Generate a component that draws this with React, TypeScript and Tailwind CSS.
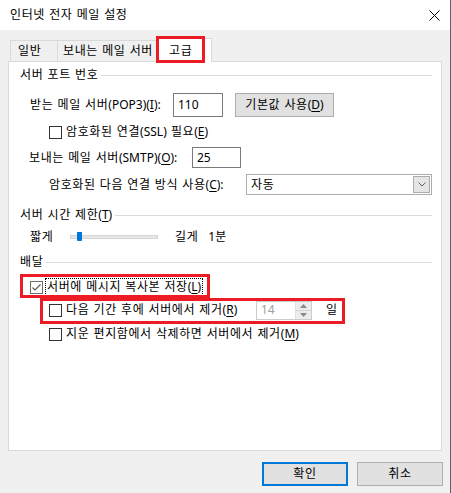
import React from 'react';

const font = { fontFamily: '"Noto Sans", "Noto Sans CJK KR", sans-serif' };

function GroupHeader({ children }: { children: React.ReactNode }) {
  return (
    <div className="flex items-center h-[20px]">
      <span className="whitespace-nowrap">{children}</span>
      <div className="flex-1 h-px bg-[#dcdcdc] ml-[3px]" />
    </div>
  );
}

function Checkbox({ checked = false, dim = false }: { checked?: boolean; dim?: boolean }) {
  return (
    <div
      className={`w-[13px] h-[13px] shrink-0 bg-white border flex items-center justify-center ${
        dim ? 'border-[#6d6d6d]' : 'border-[#333333]'
      }`}
    >
      {checked && (
        <svg width="11" height="11" viewBox="0 0 11 11">
          <path d="M1.5 5.5 L4 8 L9.5 2.5" fill="none" stroke="#5a5a5a" strokeWidth="1.2" />
        </svg>
      )}
    </div>
  );
}

// mnemonic letter
function U({ children }: { children: React.ReactNode }) {
  return <span className="underline underline-offset-2">{children}</span>;
}

// latin runs keep normal tracking (hangul is spaced out to match Malgun widths)
function L({ children }: { children: React.ReactNode }) {
  return <span className="tracking-normal">{children}</span>;
}

export default function App() {
  return (
    <div
      className="relative w-[451px] h-[493px] bg-[#f0f0f0] border-r border-[#5f5f5f] flex flex-col text-[12px] leading-[16px] tracking-[0.6px] [word-spacing:0.5px] text-black overflow-hidden"
      style={font}
    >
      {/* Title bar */}
      <div className="h-[30px] bg-white flex items-center justify-between pl-[10px] pr-[10px] shrink-0">
        <span>인터넷 전자 메일 설정</span>
        <svg width="11" height="11" viewBox="0 0 11 11">
          <path d="M0.5 0.5 L10.5 10.5 M10.5 0.5 L0.5 10.5" stroke="#000" strokeWidth="1" />
        </svg>
      </div>

      {/* Tabs */}
      <div className="h-[31px] flex items-end pl-[10px] shrink-0">
        <div className="w-[47px] h-[21px] border-t border-l border-[#d9d9d9] pl-[7px] flex items-center">일반</div>
        <div className="w-[100px] h-[21px] border-t border-l border-[#d9d9d9] pl-[5px] flex items-center whitespace-nowrap">
          보내는 메일 서버
        </div>
        <div className="relative z-10 w-[55px] h-[24px] -mb-px bg-white border-t border-l border-r border-[#d9d9d9] pl-[11px] flex items-center">
          고급
        </div>
      </div>

      {/* Panel */}
      <div className="ml-[8px] w-[434px] h-[390px] bg-white border border-[#d9d9d9] pl-[11px] pr-[9px] flex flex-col shrink-0">
        <div className="mt-[3px]">
          <GroupHeader>서버 포트 번호</GroupHeader>
        </div>

        {/* POP3 */}
        <div className="mt-[8px] h-[24px] flex items-center pl-[10px]">
          <span className="w-[143px] whitespace-nowrap">
            받는 메일 서버<L>(POP3)(<U>I</U>):</L>
          </span>
          <div className="w-[50px] h-[24px] border border-[#7a7a7a] pl-[4px] flex items-center tracking-normal">110</div>
          <div className="ml-[12px] w-[99px] h-[24px] bg-[#e1e1e1] border border-[#adadad] flex items-center justify-center whitespace-nowrap">
            기본값 사용<L>(<U>D</U>)</L>
          </div>
        </div>

        {/* SSL */}
        <div className="mt-[5px] h-[20px] flex items-center pl-[29px] gap-[4px]">
          <Checkbox />
          <span className="whitespace-nowrap">
            암호화된 연결<L>(SSL)</L> 필요<L>(<U>E</U>)</L>
          </span>
        </div>

        {/* SMTP */}
        <div className="mt-[5px] h-[21px] flex items-center pl-[9px]">
          <span className="w-[163px] whitespace-nowrap">
            보내는 메일 서버<L>(SMTP)(<U>O</U>):</L>
          </span>
          <div className="w-[49px] h-[21px] border border-[#7a7a7a] pl-[4px] flex items-center tracking-normal">25</div>
        </div>

        {/* Encryption */}
        <div className="mt-[6px] h-[21px] flex items-center pl-[29px]">
          <span className="w-[197px] whitespace-nowrap">
            암호화된 다음 연결 방식 사용<L>(<U>C</U>):</L>
          </span>
          <div className="w-[186px] h-[21px] border border-[#adadad] pl-[4px] pr-[1px] flex items-center justify-between">
            <span>자동</span>
            <div className="w-[17px] h-[17px] bg-[#e5e5e5] border border-[#acacac] flex items-center justify-center">
              <svg width="8" height="5" viewBox="0 0 8 5">
                <path d="M0.5 0.5 L4 4 L7.5 0.5" fill="none" stroke="#606060" strokeWidth="1" />
              </svg>
            </div>
          </div>
        </div>

        <div className="mt-[10px]">
          <GroupHeader>
            서버 시간 제한<L>(<U>T</U>)</L>
          </GroupHeader>
        </div>

        {/* Slider */}
        <div className="mt-[2px] h-[20px] flex items-center pl-[10px]">
          <span className="w-[40px]">짧게</span>
          <div className="relative w-[88px] h-[4px] bg-[#e7e7e7] border border-[#d6d6d6]">
            <div className="absolute left-[6px] top-[-4px] w-[5px] h-[9px] bg-[#0078d7] rounded-b-[1px]" />
          </div>
          <span className="ml-[17px]">길게</span>
          <span className="ml-[10px]">
            <L>1</L>분
          </span>
        </div>

        <div className="mt-[5px]">
          <GroupHeader>배달</GroupHeader>
        </div>

        {/* Leave copy on server */}
        <div className="mt-[5px] h-[20px] flex items-center pl-[10px]">
          <Checkbox checked dim />
          <span className="ml-[2px] px-[1px] h-[18px] flex items-center border border-dotted border-black whitespace-nowrap">
            서버에 메시지 복사본 저장<L>(<U>L</U>)</L>
          </span>
        </div>

        {/* Remove after */}
        <div className="mt-[3px] h-[20px] flex items-center pl-[29px]">
          <Checkbox />
          <span className="ml-[4px] w-[190px] whitespace-nowrap">
            다음 기간 후에 서버에서 제거<L>(<U>R</U>)</L>
          </span>
          <div className="w-[56px] h-[19px] border border-[#cccccc] flex items-center justify-between">
            <span className="pl-[4px] text-[#a0a0a0] tracking-normal">14</span>
            <div className="w-[16px] h-[17px] flex flex-col border-l border-[#e0e0e0]">
              <div className="flex-1 bg-[#ececec] border-b border-[#d4d4d4] flex items-center justify-center">
                <svg width="7" height="4" viewBox="0 0 7 4">
                  <path d="M0 4 L3.5 0 L7 4 Z" fill="#8a8a8a" />
                </svg>
              </div>
              <div className="flex-1 bg-[#ececec] flex items-center justify-center">
                <svg width="7" height="4" viewBox="0 0 7 4">
                  <path d="M0 0 L3.5 4 L7 0 Z" fill="#8a8a8a" />
                </svg>
              </div>
            </div>
          </div>
          <span className="ml-[14px]">일</span>
        </div>

        {/* Remove when deleted */}
        <div className="mt-[4px] h-[20px] flex items-center pl-[29px] gap-[4px]">
          <Checkbox />
          <span className="whitespace-nowrap">
            지운 편지함에서 삭제하면 서버에서 제거<L>(<U>M</U>)</L>
          </span>
        </div>
      </div>

      {/* Buttons */}
      <div className="mt-[11px] flex justify-end gap-[9px] pr-[7px]">
        <div className="w-[86px] h-[24px] bg-[#e1e1e1] border-2 border-[#0078d7] flex items-center justify-center">확인</div>
        <div className="w-[86px] h-[24px] bg-[#e1e1e1] border border-[#adadad] flex items-center justify-center">취소</div>
      </div>

      {/* Red annotation boxes */}
      <div className="absolute left-[156px] top-[36px] w-[49px] h-[27px] border-[3px] border-[#ed1c24] z-20 pointer-events-none" />
      <div className="absolute left-[20px] top-[274px] w-[190px] h-[24px] border-[3px] border-[#ed1c24] z-20 pointer-events-none" />
      <div className="absolute left-[40px] top-[298px] w-[305px] h-[26px] border-[3px] border-[#ed1c24] z-20 pointer-events-none" />
    </div>
  );
}
